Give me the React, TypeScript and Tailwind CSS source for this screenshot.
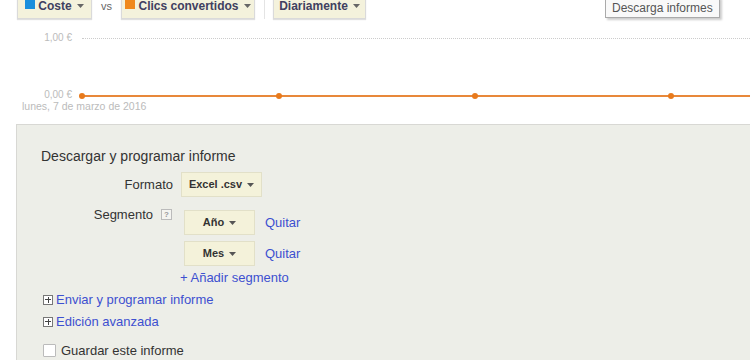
import React from "react";

const Caret = ({ c = "#555" }: { c?: string }) => (
  <svg width="7" height="4" viewBox="0 0 7 4" className="ml-[5px] shrink-0">
    <path d="M0 0 L7 0 L3.5 4 Z" fill={c} />
  </svg>
);

const TopBtn = ({ sq, label, w }: { sq?: string; label: string; w: string }) => (
  <div
    className={`${w} h-[27px] -mt-[8px] pt-[1px] flex items-center justify-center bg-[#f4f2dc] border border-[#dadada] shadow-[0_1px_1px_rgba(0,0,0,0.12)] text-[12px] font-bold text-[#404060]`}
  >
    {sq && <span className="w-[10px] h-[10px] mr-[3px] -mt-[4px]" style={{ background: sq }} />}
    <span className="leading-[14px]">{label}</span>
    <Caret c="#666" />
  </div>
);

const SmallBtn = ({ label, w }: { label: string; w: string }) => (
  <div
    className={`${w} h-[25px] flex items-center justify-center bg-[#f4f2da] border border-[#e2e0c8] text-[11px] font-bold text-[#333]`}
  >
    {label}
    <Caret />
  </div>
);

const PlusBox = () => (
  <span className="w-[10px] h-[10px] border border-[#777] bg-white mr-[3px] relative shrink-0 inline-block">
    <span className="absolute left-[1px] right-[1px] top-[3.5px] h-[1px] bg-[#444]" />
    <span className="absolute top-[1px] bottom-[1px] left-[3.5px] w-[1px] bg-[#444]" />
  </span>
);

export default function App() {
  return (
    <div
      className="w-[750px] h-[360px] overflow-hidden bg-white relative flex flex-col"
      style={{ fontFamily: '"Liberation Sans", Arial, sans-serif' }}
    >
      {/* top bar */}
      <div className="h-[19px] flex items-start pl-[17px] shrink-0">
        <TopBtn sq="#1a8fdd" label="Coste" w="w-[75px]" />
        <span className="w-[29px] text-center text-[11px] text-[#666] leading-[12px]">vs</span>
        <TopBtn sq="#f0891d" label="Clics convertidos" w="w-[134px]" />
        <div className="w-[1px] h-[19px] bg-[#e4e4e4] ml-[9px] mr-[8px]" />
        <TopBtn label="Diariamente" w="w-[93px]" />
      </div>

      {/* tooltip */}
      <div className="absolute left-[605px] -top-[3px] h-[21px] px-[6px] pt-[3px] border border-[#aaa] bg-[#f9f9f9] shadow-[2px_2px_2px_rgba(0,0,0,0.2)] text-[12px] text-[#555] leading-[15px]">
        Descarga informes
      </div>

      {/* chart */}
      <div className="shrink-0 flex flex-col">
        <div className="mt-[13px] h-[12px] flex items-center">
          <span className="w-[72px] text-right text-[10px] text-[#bbb] leading-[12px]">1,00 €</span>
          <div className="ml-[10px] flex-1 border-t border-dotted border-[#ccc]" />
        </div>
        <div className="mt-[48px] h-[8px] flex items-center">
          <span className="w-[72px] -mt-[2px] text-right text-[10px] text-[#bbb] leading-[8px]">0,00 €</span>
          <svg width="672" height="8" viewBox="0 0 672 8" className="ml-[6px]">
            <line x1="4" y1="4" x2="672" y2="4" stroke="#e8883a" strokeWidth="2" />
            {[4, 201, 397, 593].map((x) => (
              <circle key={x} cx={x} cy="4" r="3" fill="#e87a1c" />
            ))}
          </svg>
        </div>
        <div className="pl-[22px] text-[10.5px] text-[#bbb] leading-[11px] mt-[1px]">lunes, 7 de marzo de 2016</div>
      </div>

      {/* panel */}
      <div className="mt-[12px] ml-[16px] flex-1 bg-[#edeee8] border-l border-t border-[#d8d8d4] pl-[24px] pt-[23px] flex flex-col text-[13px] text-[#333]">
        <div className="text-[14px] leading-[17px]">Descargar y programar informe</div>

        <div className="mt-[7px] flex items-center">
          <span className="w-[132px] text-right leading-[15px]">Formato</span>
          <div className="ml-[8px]">
            <SmallBtn label="Excel .csv" w="w-[81px]" />
          </div>
        </div>

        <div className="mt-[9px] flex items-start">
          <div className="w-[132px] h-[16px] flex items-center justify-end">
            <span className="leading-[15px]">Segmento</span>
            <span className="ml-[8px] w-[11px] h-[11px] border border-[#bbb] bg-[#f4f4f0] text-[8px] font-bold text-[#999] leading-[9px] text-center mr-[1px]">
              ?
            </span>
          </div>
          <div className="ml-[11px] pt-[4px] flex flex-col">
            <div className="flex items-center">
              <SmallBtn label="Año" w="w-[71px]" />
              <span className="ml-[10px] text-[#3d50d0] leading-[15px]">Quitar</span>
            </div>
            <div className="mt-[6px] flex items-center">
              <SmallBtn label="Mes" w="w-[71px]" />
              <span className="ml-[10px] text-[#3d50d0] leading-[15px]">Quitar</span>
            </div>
            <div className="mt-[4px] -ml-[4px] text-[#3d50d0] leading-[15px]">+ Añadir segmento</div>
          </div>
        </div>

        <div className="mt-[7px] flex items-center text-[#3d50d0] leading-[15px] ml-[2px]">
          <PlusBox />
          Enviar y programar informe
        </div>
        <div className="mt-[7px] flex items-center text-[#3d50d0] leading-[15px] ml-[2px]">
          <PlusBox />
          Edición avanzada
        </div>
        <div className="mt-[14px] flex items-center leading-[15px] ml-[2px]">
          <span className="w-[13px] h-[13px] border border-[#bbb] bg-white rounded-[1px] mr-[5px]" />
          Guardar este informe
        </div>
      </div>
    </div>
  );
}
